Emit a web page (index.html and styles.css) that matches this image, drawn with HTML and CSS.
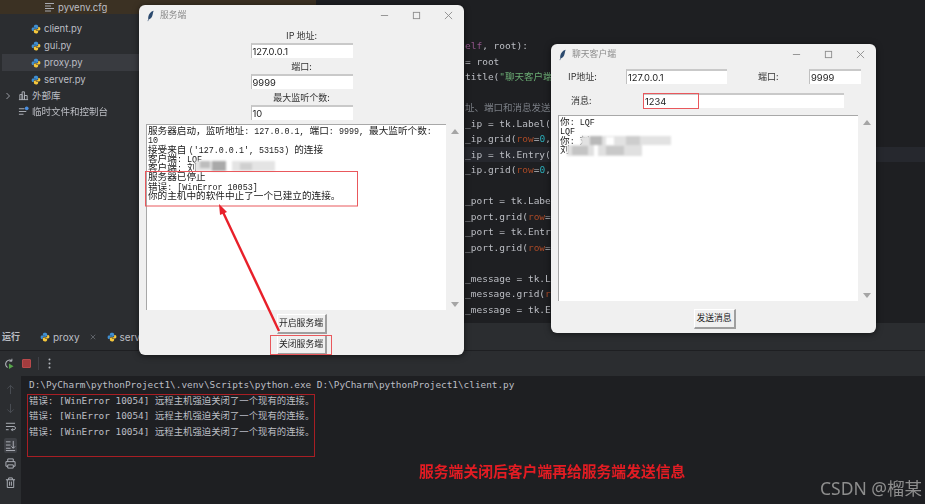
FILE: index.html
```html
<!DOCTYPE html>
<html lang="zh-CN">
<head>
<meta charset="utf-8">
<title>服务端与聊天客户端</title>
<link rel="stylesheet" href="styles.css">
</head>
<body>
<svg class="defs" width="0" height="0" aria-hidden="true">
  <defs>
    <symbol id="py" viewBox="0 0 16 16">
      <path fill="#3f8fd2" d="M8 1C5.6 1 4.6 2 4.6 3.4V5h3.6v.7H3.1C1.8 5.700 1 6.800 1 8.300c0 1.600.8 2.900 2.100 2.900h1.300V9.500c0-1.200 1-2.100 2.200-2.100h3c1 0 1.800-.8 1.800-1.800V3.200C11.400 1.900 10 1 8 1z"/>
      <path fill="#f6c83c" d="M8 15c2.400 0 3.400-1 3.400-2.400V11H7.800v-.7h5.100c1.300 0 2.100-1.100 2.100-2.600 0-1.600-.8-2.900-2.100-2.900h-1.300v1.700c0 1.200-1 2.100-2.200 2.100h-3c-1 0-1.800.8-1.800 1.800v2.400C4.600 14.100 6 15 8 15z"/>
    </symbol>
    <symbol id="feather" viewBox="0 0 10 16">
      <path fill="#2c4a6e" d="M9.500.5C5.500 1.500 2.500 5 1.800 9.500c-.2 1.300-.1 2.300.1 3L.8 15.300l.7.2 1-2.500c2.900-.7 5-4 5.600-7.200.3-1.800.8-3.800 1.400-5.300z"/>
    </symbol>
    <symbol id="min" viewBox="0 0 10 10"><path d="M1 5h8" stroke="#8c8c8c" fill="none"/></symbol>
    <symbol id="max" viewBox="0 0 10 10"><rect x="1.500" y="1.500" width="7" height="7" stroke="#8c8c8c" fill="none"/></symbol>
    <symbol id="close" viewBox="0 0 10 10"><path d="M1 1l8 8M9 1l-8 8" stroke="#8c8c8c" fill="none"/></symbol>
  </defs>
</svg>

<div class="ide">
  <div class="top">
    <aside class="tree">
      <div class="row row-venv"><svg class="ico-cfg" viewBox="0 0 10 10"><path d="M0 1.500h9M0 4h6M0 6.500h9M0 9h6" stroke="#a8abb2" fill="none"/></svg><span>pyvenv.cfg</span></div>
      <div class="row row-file"><svg class="ico"><use href="#py"/></svg><span>client.py</span></div>
      <div class="row row-file"><svg class="ico"><use href="#py"/></svg><span>gui.py</span></div>
      <div class="row row-file row-sel"><svg class="ico"><use href="#py"/></svg><span>proxy.py</span></div>
      <div class="row row-file"><svg class="ico"><use href="#py"/></svg><span>server.py</span></div>
      <div class="row row-root row-lib"><svg class="chev" viewBox="0 0 6 8"><path d="M1.500 1l3 3-3 3" stroke="#9a9da4" fill="none"/></svg><svg class="ico ico-root" viewBox="0 0 12 12"><path d="M1 10.500h10M2 10.500V5h2.500v5.500M4.500 10.500V2H7v8.500M7 10.500V6h3v4.500" stroke="#b4b7be" fill="none"/></svg><span>外部库</span></div>
      <div class="row row-root row-temp"><svg class="ico ico-root" viewBox="0 0 12 12"><path d="M1 3h6M1 6h8M1 9h5" stroke="#b4b7be" fill="none"/><circle cx="9.500" cy="2.500" r="2" fill="#4b8fe0"/></svg><span>临时文件和控制台</span></div>
    </aside>
    <main class="editor">
      <div class="code">
        <div class="line"><span class="p">elf</span>, root):</div>
        <div class="line">= root</div>
        <div class="line">title(<span class="s">"聊天客户端"</span>)</div>
        <div class="line"></div>
        <div class="line c">址、端口和消息发送内容</div>
        <div class="line">_ip = tk.Label(r</div>
        <div class="line">_ip.grid(<span class="k">row</span>=<span class="n">0</span>,</div>
        <div class="line hl">_ip = tk.Entry(r</div>
        <div class="line">_ip.grid(<span class="k">row</span>=<span class="n">0</span>,</div>
        <div class="line"></div>
        <div class="line">_port = tk.Label</div>
        <div class="line">_port.grid(<span class="k">row</span>=<span class="n">0</span></div>
        <div class="line">_port = tk.Entry</div>
        <div class="line">_port.grid(<span class="k">row</span>=<span class="n">0</span></div>
        <div class="line"></div>
        <div class="line">_message = tk.La</div>
        <div class="line">_message.grid(<span class="k">r</span></div>
        <div class="line">_message = tk.En</div>
      </div>
    </main>
  </div>

  <section class="run">
    <div class="run-tabs">
      <strong class="run-title">运行</strong>
      <div class="tab"><svg class="ico"><use href="#py"/></svg><span>proxy</span><svg class="tab-x" viewBox="0 0 8 8"><path d="M1 1l6 6M7 1l-6 6" stroke="#6f737a" fill="none"/></svg></div>
      <div class="tab"><svg class="ico"><use href="#py"/></svg><span>server</span></div>
    </div>
    <div class="run-tools">
      <svg class="tool" viewBox="0 0 12 12"><path d="M9.500 3A4.300 4.300 0 1 0 5 10.400" stroke="#b4b7be" stroke-width="1.200" fill="none"/><path d="M9.700.8v2.700H7" stroke="#b4b7be" fill="none"/><path d="M6.500 6l5 3-5 3z" fill="#57a64a"/></svg>
      <span class="stop"></span>
      <span class="sep"></span>
      <svg class="kebab" viewBox="0 0 3 11"><circle cx="1.500" cy="1.500" r="1" fill="#b4b7be"/><circle cx="1.500" cy="5.500" r="1" fill="#b4b7be"/><circle cx="1.500" cy="9.500" r="1" fill="#b4b7be"/></svg>
    </div>
    <div class="console">
      <div class="rail">
        <svg class="rail-ico" viewBox="0 0 12 12"><path d="M6 11V1.500M2.500 5L6 1.500 9.500 5" stroke="#4c4f55" fill="none"/></svg>
        <svg class="rail-ico" viewBox="0 0 12 12"><path d="M6 1v9.500M2.500 7L6 10.500 9.500 7" stroke="#4c4f55" fill="none"/></svg>
        <svg class="rail-ico" viewBox="0 0 12 12"><path d="M1 2.500h10M1 6h9a1.800 1.800 0 0 1 0 3.500H7M8.500 8L7 9.500 8.500 11M1 9.500h3" stroke="#b4b7be" fill="none"/></svg>
        <span class="rail-on"><svg class="rail-ico" viewBox="0 0 12 12"><path d="M1 2h5M1 5.500h5M1 9h5M1 11.500h10M9 1v8M7 7l2 2 2-2" stroke="#b4b7be" fill="none"/></svg></span>
        <svg class="rail-ico" viewBox="0 0 12 12"><path d="M3 4V1h6v3M3 9H1V4h10v5H9M3 7.500h6V11H3z" stroke="#b4b7be" fill="none"/></svg>
        <svg class="rail-ico" viewBox="0 0 12 12"><path d="M1 3h10M4 3V1h4v2M2.500 3v8.500h7V3M5 5v4.500M7 5v4.500" stroke="#b4b7be" fill="none"/></svg>
      </div>
      <pre class="out">D:\PyCharm\pythonProject1\.venv\Scripts\python.exe D:\PyCharm\pythonProject1\client.py
错误: [WinError 10054] 远程主机强迫关闭了一个现有的连接。
错误: [WinError 10054] 远程主机强迫关闭了一个现有的连接。
错误: [WinError 10054] 远程主机强迫关闭了一个现有的连接。</pre>
    </div>
  </section>
</div>

<div class="win win-server">
  <header class="titlebar">
    <svg class="feather"><use href="#feather"/></svg>
    <span class="win-title">服务端</span>
    <svg class="ctl"><use href="#min"/></svg>
    <svg class="ctl"><use href="#max"/></svg>
    <svg class="ctl"><use href="#close"/></svg>
  </header>
  <div class="form">
    <label class="lbl">IP 地址:</label>
    <div class="entry entry-s">127.0.0.1</div>
    <label class="lbl">端口:</label>
    <div class="entry entry-s">9999</div>
    <label class="lbl">最大监听个数:</label>
    <div class="entry entry-s">10</div>
  </div>
  <div class="logwrap logwrap-s">
    <div class="log log-s">
<p>服务器启动，监听地址<i>: 127.0.0.1, </i>端口<i>: 9999, </i>最大监听个数<i>:</i></p>
<p><i>10</i></p>
<p>接受来自 <i>('127.0.0.1', 53153) </i>的连接</p>
<p>客户端<i>: LQF</i></p>
<p>客户端<i>: </i>刘</p>
<p>服务器已停止</p>
<p>错误<i>: [WinError 10053]</i></p>
<p>你的主机中的软件中止了一个已建立的连接。</p>
    </div>
    <div class="sbar"><b class="up"></b><b class="down"></b></div>
  </div>
  <div class="btns">
    <button class="btn">开启服务端</button>
    <button class="btn">关闭服务端</button>
  </div>
</div>

<div class="win win-client">
  <header class="titlebar">
    <svg class="feather"><use href="#feather"/></svg>
    <span class="win-title">聊天客户端</span>
    <svg class="ctl"><use href="#min"/></svg>
    <svg class="ctl"><use href="#max"/></svg>
    <svg class="ctl"><use href="#close"/></svg>
  </header>
  <div class="cgrid">
    <label class="lbl lbl-ip">IP地址:</label>
    <div class="entry entry-ip">127.0.0.1</div>
    <label class="lbl lbl-port">端口:</label>
    <div class="entry entry-port">9999</div>
  </div>
  <div class="cmsg">
    <label class="lbl lbl-msg">消息:</label>
    <div class="entry entry-msg">1234</div>
  </div>
  <div class="logwrap logwrap-c">
    <div class="log log-c">
<p>你<i>: LQF</i></p>
<p><i>LQF</i></p>
<p>你<i>: </i>刘</p>
<p>刘</p>
    </div>
    <div class="sbar"><b class="up"></b><b class="down"></b></div>
  </div>
  <div class="btns"><button class="btn btn-send">发送消息</button></div>
</div>

<svg class="marks" viewBox="0 0 925 504" aria-hidden="true">
  <g class="mosaic">
    <rect x="195" y="161" width="80" height="10" fill="#e4e4e4"/>
    <rect x="200" y="161" width="10" height="7" fill="#bdbdbd"/>
    <rect x="212" y="161" width="14" height="10" fill="#a9a9a9"/>
    <rect x="226" y="161" width="6" height="10" fill="#fff"/>
    <rect x="240" y="163" width="12" height="7" fill="#cfcfcf"/>
    <rect x="581" y="136" width="90" height="9" fill="#e2e2e2"/>
    <rect x="590" y="136" width="12" height="9" fill="#b9b9b9"/>
    <rect x="606" y="137" width="8" height="8" fill="#fff"/>
    <rect x="626" y="136" width="14" height="9" fill="#cdcdcd"/>
    <rect x="567" y="145" width="75" height="11" fill="#e0e0e0"/>
    <rect x="572" y="146" width="16" height="9" fill="#c4c4c4"/>
    <rect x="594" y="145" width="4" height="11" fill="#fff"/>
    <rect x="606" y="146" width="18" height="9" fill="#c8c8c8"/>
  </g>
  <g fill="none" stroke="#e9585c">
    <rect x="145.500" y="171.500" width="212" height="34.500"/>
    <rect x="270.500" y="335.500" width="61" height="19"/>
    <rect x="643.500" y="93.500" width="55" height="15"/>
  </g>
  <rect x="27.500" y="394.500" width="287" height="62" fill="none" stroke="#a81e24"/>
  <path d="M279 331L222 210" stroke="#e8202a" stroke-width="2.400" fill="none"/>
  <path d="M219 204l8 8-7 3z" fill="#e8202a"/>
</svg>

<div class="note">服务端关闭后客户端再给服务端发送信息</div>
<div class="brand">CSDN @榴某</div>
</body>
</html>
```

FILE: styles.css
```css
* { box-sizing: border-box; }
html, body { margin: 0; padding: 0; }
body {
  position: relative;
  width: 925px;
  height: 504px;
  overflow: hidden;
  background: #1e1f22;
  font-family: "Noto Sans CJK SC", "Noto Sans", sans-serif;
  filter: blur(0.35px);
}
.defs { position: absolute; }

.ide { display: flex; flex-direction: column; height: 504px; }
.top { display: flex; height: 323px; }

/* project tree */
.tree { width: 316px; background: #2b2d30; color: #bcbec4; font: 9.5px/17px "Inter", "Noto Sans CJK SC", sans-serif; }
.row { display: flex; align-items: center; }
.row-venv { height: 14px; padding-left: 45px; background: #3b3123; gap: 3px; }
.ico-cfg { width: 10px; height: 10px; }
.row-file { height: 17px; padding-left: 31px; gap: 3px; }
.row-file:nth-child(2) { margin-top: 6px; }
.row-sel { background: #393b40; margin-left: 2px; padding-left: 29px; }
.ico { width: 10px; height: 10px; flex: none; }
.row-root { height: 17px; padding-left: 5px; gap: 3px; }
.row-lib { margin-top: -1px; }
.chev { width: 6px; height: 8px; margin-right: 4px; }
.ico-root { width: 11px; height: 11px; }
.row-temp { padding-left: 18px; margin-top: -1px; }

/* editor */
.editor { flex: 1; overflow: hidden; }
.code { padding: 38px 0 0 149px; font: 9.5px/15.5px "DejaVu Sans Mono", "Noto Sans CJK SC", monospace; color: #bcbec4; }
.line { height: 15.5px; white-space: pre; }
.hl { background: #26282e; margin-left: -149px; padding-left: 149px; }
.p { color: #94558d; }
.s { color: #6aab73; }
.c { color: #7a7e85; }
.k { color: #aa4926; }
.n { color: #2aacb8; }

/* run panel */
.run { flex: 1; display: flex; flex-direction: column; background: #2b2d30; color: #bcbec4; }
.run-tabs { height: 28px; display: flex; align-items: center; padding-left: 2px; border-bottom: 1px solid #1e1f22; font: 10px "Inter", "Noto Sans CJK SC", sans-serif; }
.run-title { width: 38px; font-size: 9px; font-weight: 700; }
.tab { display: flex; align-items: center; gap: 3px; margin-right: 11px; }
.tab-x { width: 6px; height: 6px; margin-left: 7px; }
.run-tools { height: 25px; display: flex; align-items: center; padding-left: 3px; }
.tool { width: 11px; height: 11px; }
.stop { width: 9px; height: 9px; margin-left: 8px; background: #a23c3e; border-radius: 1px; border: 1px solid #b8494b; }
.sep { width: 1px; height: 13px; background: #3f4147; margin-left: 7px; }
.kebab { width: 3px; height: 11px; margin-left: 9px; }

.console { flex: 1; display: flex; background: #1e1f22; }
.rail { width: 21px; background: #2b2d30; display: flex; flex-direction: column; align-items: center; padding-top: 8px; gap: 7.5px; }
.rail-ico { width: 11px; height: 11px; display: block; flex: none; }
.rail-on { width: 13px; height: 15px; margin: -2px 0; background: #3d3f44; border-radius: 2px; display: flex; align-items: center; justify-content: center; }
.out { margin: 0; padding: 1px 0 0 8px; font: 9.4px/15.6px "DejaVu Sans Mono", "Noto Sans CJK SC", monospace; color: #bcbec4; }

/* tk windows */
.win { position: absolute; width: 325px; background: #f0f0f0; border-radius: 6px; box-shadow: 0 1px 6px rgba(0,0,0,.55); color: #222; font: 9px/1 "Noto Sans CJK SC", sans-serif; }
.win-server { left: 139px; top: 5px; height: 350px; }
.win-client { left: 551px; top: 44px; height: 289px; }
.titlebar { height: 21px; display: flex; align-items: center; padding: 0 11px 0 8px; }
.feather { width: 7px; height: 12px; flex: none; }
.win-title { flex: 1; margin-left: 6px; color: #8c8c8c; font-size: 8.8px; }
.ctl { width: 9px; height: 9px; margin-left: 23px; }

.form { display: flex; flex-direction: column; align-items: center; margin-top: 1px; }
.lbl { height: 16px; display: flex; align-items: center; justify-content: center; color: #333; font-size: 9px; }
.entry { height: 15px; background: #fff; border-top: 2px solid #c9c9c9; border-left: 1px solid #c0c0c0; padding-left: 1px; font: 9.4px/13px "Inter", sans-serif; color: #222; }
.entry-s { width: 102px; }

.logwrap { display: flex; }
.logwrap-s { margin: 4px 0 0 7px; height: 186px; }
.logwrap-c { margin: 7px 0 0 7px; height: 186px; }
.log { width: 300px; background: #fff; border-top: 1px solid #a8a8a8; border-left: 1px solid #a8a8a8; padding: 1px 0 0 1px; font-size: 9.65px; color: #1a1a1a; overflow: hidden; }
.log p { margin: 0; height: 9.3px; line-height: 9.3px; white-space: nowrap; }
.log i { font: normal 8.4px/9.3px "Liberation Mono", monospace; }
.sbar { width: 13px; display: flex; flex-direction: column; justify-content: space-between; align-items: center; padding: 5px 0 3px 0; }
.sbar b { width: 0; height: 0; border-left: 4px solid transparent; border-right: 4px solid transparent; margin-left: 5px; }
.up { border-bottom: 5px solid #a5a5a5; }
.down { border-top: 5px solid #a5a5a5; }

.btns { display: flex; flex-direction: column; align-items: center; gap: 1px; margin-top: 4px; }
.btn { width: 50px; height: 20px; padding: 0; background: #f0f0f0; border: 0; border-top: 1px solid #fff; border-left: 1px solid #fff; border-right: 2px solid #9f9f9f; border-bottom: 2px solid #9f9f9f; color: #222; font: 8.8px/1 "Noto Sans CJK SC", sans-serif; }
.btn-send { width: 42px; }
.win-client .btns { margin-top: 8px; padding-left: 2px; }

.cgrid { display: grid; grid-template-columns: 75px 101px 82px 52px; align-items: center; height: 15px; margin-top: 4px; }
.lbl-ip, .lbl-port { height: 15px; justify-content: flex-start; }
.lbl-ip { padding-left: 17px; }
.lbl-port { padding-left: 31px; }
.cmsg { display: grid; grid-template-columns: 92px 201px; align-items: center; height: 15px; margin-top: 9px; }
.lbl-msg { justify-content: flex-start; padding-left: 20px; height: 15px; }

/* annotations */
.marks { position: absolute; left: 0; top: 0; width: 925px; height: 504px; pointer-events: none; }
.mosaic { filter: blur(1px); }
.note { position: absolute; left: 419px; top: 461px; font: 700 14.8px/20px "Noto Sans CJK SC", sans-serif; color: #e31c23; white-space: nowrap; }
.brand { position: absolute; left: 820px; top: 476px; font: 17.5px/24px "Noto Sans", "Noto Sans CJK SC", sans-serif; color: #8d8d8d; white-space: nowrap; }
```
